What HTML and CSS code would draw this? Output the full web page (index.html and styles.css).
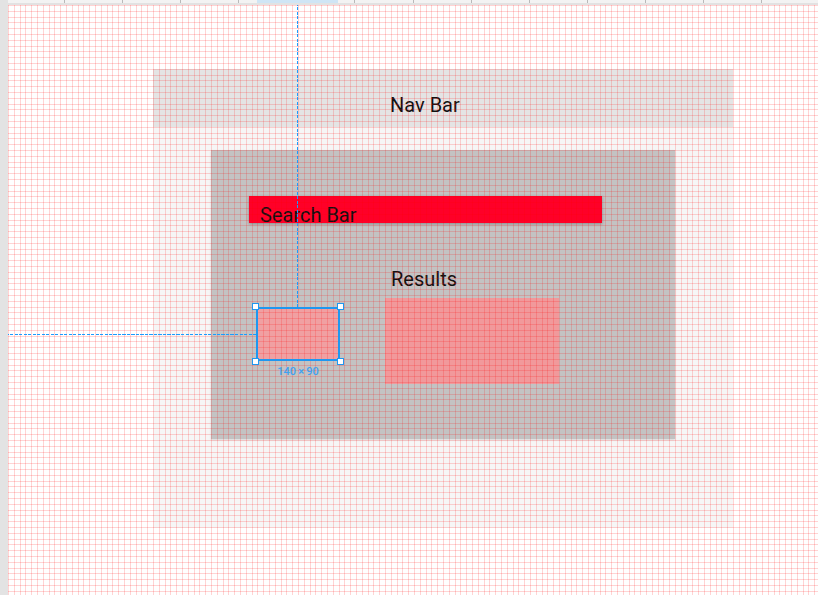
FILE: index.html
```html
<!DOCTYPE html>
<html lang="en">
<head>
<meta charset="utf-8">
<title>Wireframe</title>
<link rel="stylesheet" href="styles.css">
</head>
<body>
<div class="app">
  <div class="side"></div>
  <div class="ruler"><div class="ruler-sel"></div></div>
  <div class="canvas">
    <div class="frame">
      <div class="navbar">Nav Bar</div>
      <div class="board">
        <div class="search">Search Bar</div>
        <div class="results-row">
          <div class="sel-wrap">
            <div class="sel">
              <div class="sel-frame">
                <span class="guide-v"></span>
                <span class="guide-h"></span>
                <span class="handle tl"></span>
                <span class="handle tr"></span>
                <span class="handle bl"></span>
                <span class="handle br"></span>
              </div>
            </div>
            <div class="sel-label">140&thinsp;×&thinsp;90</div>
          </div>
          <div class="results">
            <div class="results-title">Results</div>
            <div class="result-box"></div>
          </div>
        </div>
      </div>
    </div>
    <div class="grid"></div>
  </div>
</div>
</body>
</html>
```

FILE: styles.css
```css
html, body {
  margin: 0;
  padding: 0;
  height: 595px;
  overflow: hidden;
  background: #ffffff;
  font-family: Roboto, "Noto Sans", Arial, sans-serif;
}

.app {
  display: grid;
  grid-template-columns: 8px 1fr;
  grid-template-rows: 5px 1fr;
  height: 595px;
}

.side {
  grid-row: 1 / 3;
  grid-column: 1;
  background: #e3e3e3;
}

.ruler {
  grid-row: 1;
  grid-column: 2;
  box-sizing: border-box;
  height: 5px;
  background:
    repeating-linear-gradient(to right, transparent 0 57.08px, #b9b9b9 57.08px 58.08px) -1px 0 / 100% 3px no-repeat,
    #f3f3f3;
  border-bottom: 2px solid #e2e2e2;
}

.ruler-sel {
  margin-left: 249px;
  width: 81px;
  height: 3px;
  background: #cfe5f5;
}

.canvas {
  grid-row: 2;
  grid-column: 2;
  position: relative;
  overflow: hidden;
  padding: 64px 0 0 145px;
}

.grid {
  --line: rgba(255, 0, 0, 0.17);
  position: absolute;
  inset: 0;
  z-index: 1;
  pointer-events: none;
  background-image:
    linear-gradient(to right,
      var(--line) 0 1px, transparent 1px 6px,
      var(--line) 6px 7px, transparent 7px 12px,
      var(--line) 12px 13px, transparent 13px 17px,
      var(--line) 17px 18px, transparent 18px 23px,
      var(--line) 23px 24px, transparent 24px 29px),
    linear-gradient(to bottom,
      var(--line) 0 1px, transparent 1px 6px,
      var(--line) 6px 7px, transparent 7px 12px,
      var(--line) 12px 13px, transparent 13px 17px,
      var(--line) 17px 18px, transparent 18px 23px,
      var(--line) 23px 24px, transparent 24px 29px);
  background-size: 29px 100%, 100% 29px;
}

.frame {
  width: 580px;
  height: 459px;
  background: #f6f6f6;
  display: flex;
  flex-direction: column;
}

.navbar {
  box-sizing: border-box;
  height: 58px;
  background: #e4e4e4;
  padding: 24px 0 0 237px;
  font-size: 20px;
  line-height: 24px;
  color: #111;
}

.board {
  box-sizing: border-box;
  margin: 23px 58px 0;
  height: 289px;
  background: #c3c3c3;
  box-shadow: 0 1px 2px rgba(0, 0, 0, 0.12);
  padding: 46px 0 0 38px;
}

.search {
  box-sizing: border-box;
  width: 353px;
  height: 27px;
  padding: 7px 11px 0;
  background: #ff0028;
  box-shadow: 0 1px 3px rgba(0, 0, 0, 0.3);
  font-size: 20px;
  line-height: 24px;
  color: #111;
}

.results-row {
  display: flex;
  align-items: flex-start;
  margin: 44px 0 0 7px;
}

.sel-wrap {
  width: 84px;
  margin-top: 40px;
}

.sel {
  position: relative;
  height: 54px;
  background: #f0a0a2;
}

.sel-frame {
  position: absolute;
  inset: 0;
  z-index: 2;
  border: 2px solid #1f97f0;
}

.guide-v {
  position: absolute;
  left: 39px;
  bottom: 100%;
  margin-bottom: 2px;
  width: 1px;
  height: 320px;
  background: repeating-linear-gradient(to top, #1a9cff 0 3px, transparent 3px 4.5px);
}

.guide-h {
  position: absolute;
  right: 100%;
  top: 25px;
  margin-right: 2px;
  width: 270px;
  height: 1px;
  background: repeating-linear-gradient(to left, #1a9cff 0 3px, transparent 3px 4.5px);
}

.handle {
  position: absolute;
  box-sizing: border-box;
  width: 7px;
  height: 7px;
  background: #ffffff;
  border: 1px solid #1f97f0;
}
.handle.tl { left: -6px; top: -6px; }
.handle.tr { right: -6px; top: -6px; }
.handle.bl { left: -6px; bottom: -6px; }
.handle.br { right: -6px; bottom: -6px; }

.sel-label {
  position: relative;
  z-index: 2;
  margin-top: 4px;
  text-align: center;
  font-size: 11px;
  line-height: 13px;
  font-weight: 500;
  color: #3fa2f0;
}

.results {
  margin-left: 45px;
}

.results-title {
  margin-left: 6px;
  font-size: 20px;
  line-height: 24px;
  color: #111;
}

.result-box {
  margin-top: 7px;
  width: 174px;
  height: 86px;
  background: #f1999b;
}
```
